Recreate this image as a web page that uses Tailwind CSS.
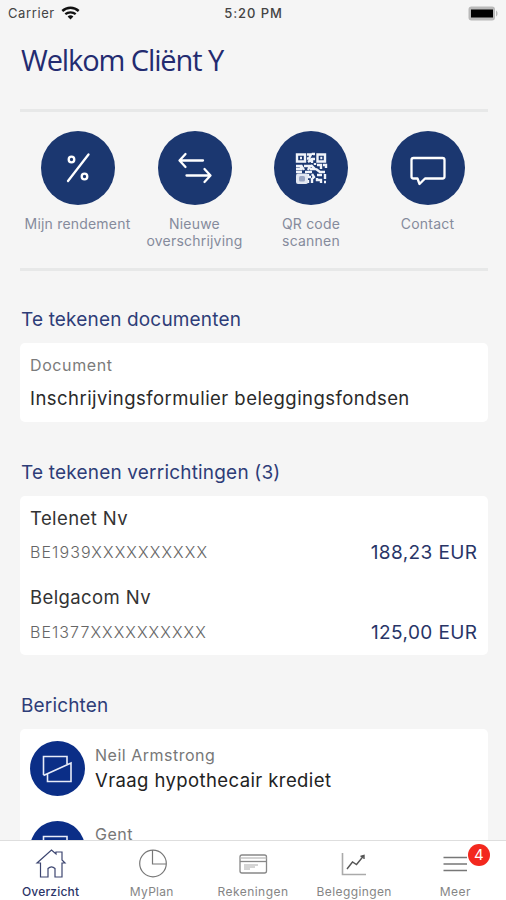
<!DOCTYPE html>
<html lang="nl">
<head>
<meta charset="utf-8">
<title>Overzicht</title>
<script src="https://cdn.jsdelivr.net/npm/@tailwindcss/browser@4"></script>
</head>
<body class="bg-[#f5f5f5] font-['Inter',sans-serif] overflow-hidden">
<div class="w-[506px] h-[900px] flex flex-col overflow-hidden">
  <header class="h-[26px] shrink-0 grid grid-cols-3 items-center px-2 text-[13px] leading-none text-[#444]">
    <div class="flex items-center gap-[6px]"><span class="tracking-[0.6px]">Carrier</span>
      <svg class="w-[19px] h-[14px]" viewBox="0 0 19 14"><path d="M1.3 5A12 12 0 0 1 17.7 5" fill="none" stroke="#111" stroke-width="2.4"/><path d="M4.3 8.2A8 8 0 0 1 14.7 8.2" fill="none" stroke="#111" stroke-width="2.3"/><path d="M9.5 13.5L6.6 10.6A4.3 4.3 0 0 1 12.4 10.6Z" fill="#111"/></svg>
    </div>
    <div class="text-center font-medium tracking-[0.95px] pl-[1px]">5:20 PM</div>
    <div class="flex justify-end"><svg class="w-[30px] h-[15px]" viewBox="0 0 30 15"><rect x=".5" y=".5" width="26.5" height="14" rx="3" fill="#b9b9b9"/><path d="M28 4.500c2 1 2 5 0 6z" fill="#b9b9b9"/><rect x="3" y="3.500" width="22" height="8" fill="#000"/></svg></div>
  </header>
  <main class="flex-1 min-h-0 overflow-hidden pl-5 pr-[18px]">
    <h1 class="h-[83px] pt-[14px] pl-[1px] font-['Open_Sans',sans-serif] text-[29px] leading-[40px] font-normal tracking-[-1.1px] text-[#232b70]">Welkom Cliënt Y</h1>
    <section class="h-[162px] border-y-[3px] border-[#e7e8e8] pt-[19px] grid grid-cols-[repeat(4,117px)] text-[14px] leading-[17px] tracking-[0.2px] text-center text-[#858b9c]">
      <div class="-ml-[2px] flex flex-col items-center gap-[10px]">
        <svg class="w-[74px] h-[74px]" viewBox="0 0 74 74" fill="none" stroke="#fff" stroke-width="2.3" stroke-linecap="round"><circle cx="37" cy="37" r="37" fill="#1b3770" stroke="none"/><path d="M47.500 23.500L27 50"/><circle cx="30.500" cy="28.500" r="2.800"/><circle cx="43.500" cy="45.500" r="2.800"/></svg>
        <span>Mijn rendement</span>
      </div>
      <div class="-ml-[2px] flex flex-col items-center gap-[10px]">
        <svg class="w-[74px] h-[74px]" viewBox="0 0 74 74" fill="none" stroke="#fff" stroke-width="2.3" stroke-linecap="round" stroke-linejoin="round"><circle cx="37" cy="37" r="37" fill="#1b3770" stroke="none"/><path d="M45 29.500H22M27.500 23L21.500 29.500L27.500 36M28.500 44.500H52M46.500 38L52.500 44.500L46.500 51"/></svg>
        <span>Nieuwe<br>overschrijving</span>
      </div>
      <div class="-ml-[3px] flex flex-col items-center gap-[10px]">
        <svg class="w-[74px] h-[74px]" viewBox="0 0 74 74"><circle cx="37" cy="37" r="37" fill="#1b3770"/><g fill="none" stroke="#f1f4fa" stroke-width="2.400"><path d="M23 23.500h8v7h-8zM43.500 23.500h7.500v7h-7.500z"/><path d="M26 27h2M46.300 27h2M33 23.500h4l-2 4h-2M34 31l4-3h3M39 24v-1h2M38 32v-3M22 35h5v3h-5M27 34l3 5M30 35h6l-2 4M37 34l4 4h-5M41 34v-2M43 34h4v4M49 34h3v3M42 38l4 3h5M22 41h6M31 41h7"/><path d="M38 43l2 3-2 2v4M34 43v3h3M34 49v3M43 44h5M43 47v2h4v3M51 43v5M50 51h2"/></g><rect x="22" y="42.500" width="12" height="10.500" rx="2" fill="#e3e8f2"/><rect x="25" y="45" width="6" height="5.500" rx="1.500" fill="#9aa6c3"/></svg>
        <span>QR code<br>scannen</span>
      </div>
      <div class="-ml-[4px] flex flex-col items-center gap-[10px]">
        <svg class="w-[74px] h-[74px]" viewBox="0 0 74 74" fill="none" stroke="#fff" stroke-width="2.300" stroke-linejoin="round"><circle cx="37" cy="37" r="37" fill="#1b3770" stroke="none"/><path d="M22.500 27h29a2 2 0 0 1 2 2v16.500a2 2 0 0 1-2 2H34L28.500 53L26.500 47.500H22.500a2 2 0 0 1-2-2V29a2 2 0 0 1 2-2z"/></svg>
        <span>Contact</span>
      </div>
    </section>
    <section class="pt-[36px]">
      <h2 class="h-[36px] leading-[26px] text-[19px] tracking-[0.16px] text-[#2e3d78] pl-[1px]">Te tekenen documenten</h2>
      <div class="h-[79px] rounded-[5px] bg-white px-[10px] pt-[10px]">
        <div class="text-[16px] leading-[25px] tracking-[0.6px] text-[#7b7b7b]">Document</div>
        <div class="pt-[7px] text-[18.5px] leading-[26px] tracking-[0.45px] text-[#2a2a2a]">Inschrijvingsformulier beleggingsfondsen</div>
      </div>
    </section>
    <section class="pt-[38px]">
      <h2 class="h-[36px] leading-[26px] text-[19px] tracking-[0.19px] text-[#2e3d78] pl-[1px]">Te tekenen verrichtingen (3)</h2>
      <div class="h-[159px] rounded-[5px] bg-white pl-[10px] pt-[8px] pr-[11px]">
        <div class="h-[79px]"><div class="text-[18.5px] leading-[28px] tracking-[0.4px] text-[#333]">Telenet Nv</div>
          <div class="pt-[7px] flex justify-between items-start"><span class="leading-[26px] text-[16px] font-light tracking-[1.1px] text-[#666]">BE1939XXXXXXXXXX</span><span class="leading-[28px] text-[19px] tracking-[0.4px] -mr-[0.4px] text-[#283567]">188,23 EUR</span></div></div>
        <div class="h-[79px]"><div class="text-[18.5px] leading-[28px] tracking-[0.4px] text-[#333]">Belgacom Nv</div>
          <div class="pt-[8px] flex justify-between items-start"><span class="leading-[26px] text-[16px] font-light tracking-[1.05px] text-[#666]">BE1377XXXXXXXXXX</span><span class="leading-[28px] text-[19px] tracking-[0.4px] -mr-[0.4px] text-[#283567]">125,00 EUR</span></div></div>
      </div>
    </section>
    <section class="pt-[38px]">
      <h2 class="h-[36px] leading-[26px] text-[19px] tracking-[0.16px] text-[#2e3d78] pl-[1px]">Berichten</h2>
      <div class="h-[180px] rounded-t-[5px] bg-white px-[10px] pt-[12px]">
        <div class="h-[80px] flex gap-[10px]">
          <svg class="w-[55px] h-[55px] shrink-0" viewBox="0 0 55 55" fill="none" stroke="#e8ecf8" stroke-width="1.600"><circle cx="27.500" cy="27.500" r="27.500" fill="#0b2e87" stroke="none"/><path d="M13.500 34V15.500H37V23M13.500 34.500L41 22V40.500H17.500V33"/></svg>
          <div class="pt-[2px]"><div class="text-[16px] leading-[25px] tracking-[0.5px] text-[#777]">Neil Armstrong</div><div class="text-[18.5px] leading-[25px] tracking-[0.4px] text-[#222]">Vraag hypothecair krediet</div></div>
        </div>
        <div class="h-[80px] flex gap-[10px]">
          <svg class="w-[55px] h-[55px] shrink-0" viewBox="0 0 55 55" fill="none" stroke="#e8ecf8" stroke-width="1.600"><circle cx="27.500" cy="27.500" r="27.500" fill="#0b2e87" stroke="none"/><path d="M13.500 34V15.500H37V23M13.500 34.500L41 22V40.500H17.500V33"/></svg>
          <div class="pt-px"><div class="text-[16px] leading-[25px] tracking-[0.5px] text-[#777]">Gent</div></div>
        </div>
      </div>
    </section>
  </main>
  <nav class="h-[60px] shrink-0 bg-white border-t border-[#dedede] grid grid-cols-5 pt-[7px] text-[12px] leading-[16px] tracking-[0.45px] text-[#858585] text-center">
    <div class="flex flex-col items-center gap-[4px] text-[#2c3568]"><svg class="w-8 h-8" viewBox="0 0 32 32" fill="none" stroke="#3c4570" stroke-width="1.200"><path d="M2 15L16.500 2L21 6V4H27V12L30 15H27V29H20V20.500Q16.500 17 13 20.500V29H5.500V15Z"/></svg><span class="font-medium tracking-[0.2px]">Overzicht</span></div>
    <div class="flex flex-col items-center gap-[4px]"><svg class="w-8 h-8" viewBox="0 0 32 32" fill="none" stroke="#777" stroke-width="1.200"><circle cx="17" cy="15.500" r="13.300"/><path d="M16.500 2V16H30"/></svg><span class="tracking-[0.3px]">MyPlan</span></div>
    <div class="flex flex-col items-center gap-[4px]"><svg class="w-8 h-8" viewBox="0 0 32 32" fill="none" stroke="#888" stroke-width="1.300"><rect x="3" y="7" width="26.500" height="18" rx="2"/><path d="M3 10H29.500" stroke="#bbb"/><path d="M3 13.500H29.500"/><path d="M7 17H21M7 19H18M7 21H13" stroke="#aaa" stroke-width="1"/></svg><span>Rekeningen</span></div>
    <div class="flex flex-col items-center gap-[4px]"><svg class="w-8 h-8" viewBox="0 0 32 32" fill="none"><path d="M4.500 5V26.500H28" stroke="#aaa" stroke-width="1.600"/><path d="M9 21L14.500 14L18.500 16.500L25.500 8M22.500 8.500L26 7.500V11" stroke="#555" stroke-width="1.400"/></svg><span class="tracking-[0.4px]">Beleggingen</span></div>
    <div class="relative flex flex-col items-center gap-[4px]"><svg class="w-8 h-8" viewBox="0 0 32 32" stroke="#777" stroke-width="1.400"><path d="M4.500 9.500H28M4.500 16H28M4.500 22.500H28"/></svg><span>Meer</span><span class="absolute left-[63px] top-[-4px] w-[22px] h-[22px] rounded-full bg-[#f3281e] text-white text-[15px] leading-[22px] tracking-normal">4</span></div>
  </nav>
</div>
</body>
</html>
